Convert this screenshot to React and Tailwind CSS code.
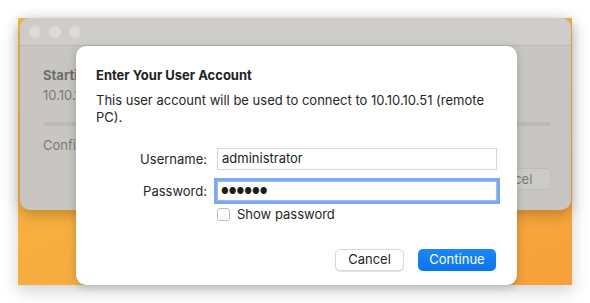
export default function App() {
  const font = { fontFamily: 'Inter, "Noto Sans", sans-serif' };
  return (
    <div className="w-[590px] h-[303px] bg-white pt-[18px] pl-[18px]" style={font}>
      <div className="relative w-[554px] h-[267px] bg-[linear-gradient(160deg,#f2c24a_0%,#f7b040_45%,#f6a03a_100%)] shadow-[0_6px_16px_rgba(0,0,0,0.18)]">
        {/* background window */}
        <div className="absolute left-[2px] top-0 w-[551px] h-[192px] rounded-[10px] bg-[#c8c6c3] overflow-hidden shadow-[0_4px_14px_rgba(90,50,0,0.35)]">
          <div className="h-[28px] bg-[#cfcdca] border-b border-[#b9b7b4] flex items-center gap-[8px] pl-[9px]">
            <div className="w-[12px] h-[12px] rounded-full bg-[#dedbd7]" />
            <div className="w-[12px] h-[12px] rounded-full bg-[#dedbd7]" />
            <div className="w-[12px] h-[12px] rounded-full bg-[#dedbd7]" />
          </div>
          <div className="pl-[23px] pr-[20px] pt-[21px] text-[13px] text-[#7b7977]">
            <div className="font-bold leading-[16px] text-[#6f6d6b]">Starting</div>
            <div className="mt-[4px] leading-[16px]">10.10.10.51</div>
            <div className="mt-[19px] h-[4px] rounded-full bg-[#bcbab7]" />
            <div className="mt-[11px] flex items-start justify-between">
              <div className="leading-[16px]">Configuring</div>
              <div className="mt-[31px] w-[80px] h-[22px] rounded-[5px] bg-[#cdcbc8] border border-[#bebcb9] flex items-center justify-center leading-none">Cancel</div>
            </div>
          </div>
        </div>
        {/* sheet */}
        <div className="absolute left-[58px] top-[28px] w-[441px] h-[239px] bg-white rounded-[10px] shadow-[0_2px_10px_rgba(0,0,0,0.2)] px-[20px] pt-[21px] text-[13px] text-[#1d1d1d]">
          <div className="font-bold leading-[16px] text-[#222]">Enter Your User Account</div>
          <div className="mt-[9px] leading-[17px] text-[#262626]">
            This user account will be used to connect to 10.10.10.51 (remote PC).
          </div>
          <div className="mt-[22px] grid grid-cols-[111px_280px] gap-x-[10px] items-center">
            <div className="text-right leading-[16px] text-[#262626]">Username:</div>
            <div className="h-[22px] border border-[#d6d6d6] bg-white flex items-center pl-[4px] text-[#1d1d1d]">administrator</div>
            <div className="text-right leading-[16px] text-[#262626] mt-[11px]">Password:</div>
            <div className="mt-[11px] h-[20px] ring-[3px] ring-[#7aa9ee] border border-[#9dbdf0] bg-white flex items-center pl-[3px] text-[8.5px] tracking-[0px] text-[#1d1d1d]">●●●●●●</div>
            <div />
            <div className="mt-[5px] flex items-center gap-[7px]">
              <div className="w-[13px] h-[13px] rounded-[3px] border border-[#bdbdbd] bg-white" />
              <span className="leading-[16px] text-[#262626]">Show password</span>
            </div>
          </div>
          <div className="absolute right-[21px] bottom-[14px] flex gap-[14px]">
            <div className="w-[69px] h-[22px] rounded-[5px] bg-white border border-[#d8d8d8] shadow-[0_1px_1px_rgba(0,0,0,0.12)] flex items-center justify-center text-[#262626]">Cancel</div>
            <div className="w-[78px] h-[22px] rounded-[5px] bg-[linear-gradient(#1b87f7,#0a74ee)] flex items-center justify-center text-white">Continue</div>
          </div>
        </div>
      </div>
    </div>
  );
}
